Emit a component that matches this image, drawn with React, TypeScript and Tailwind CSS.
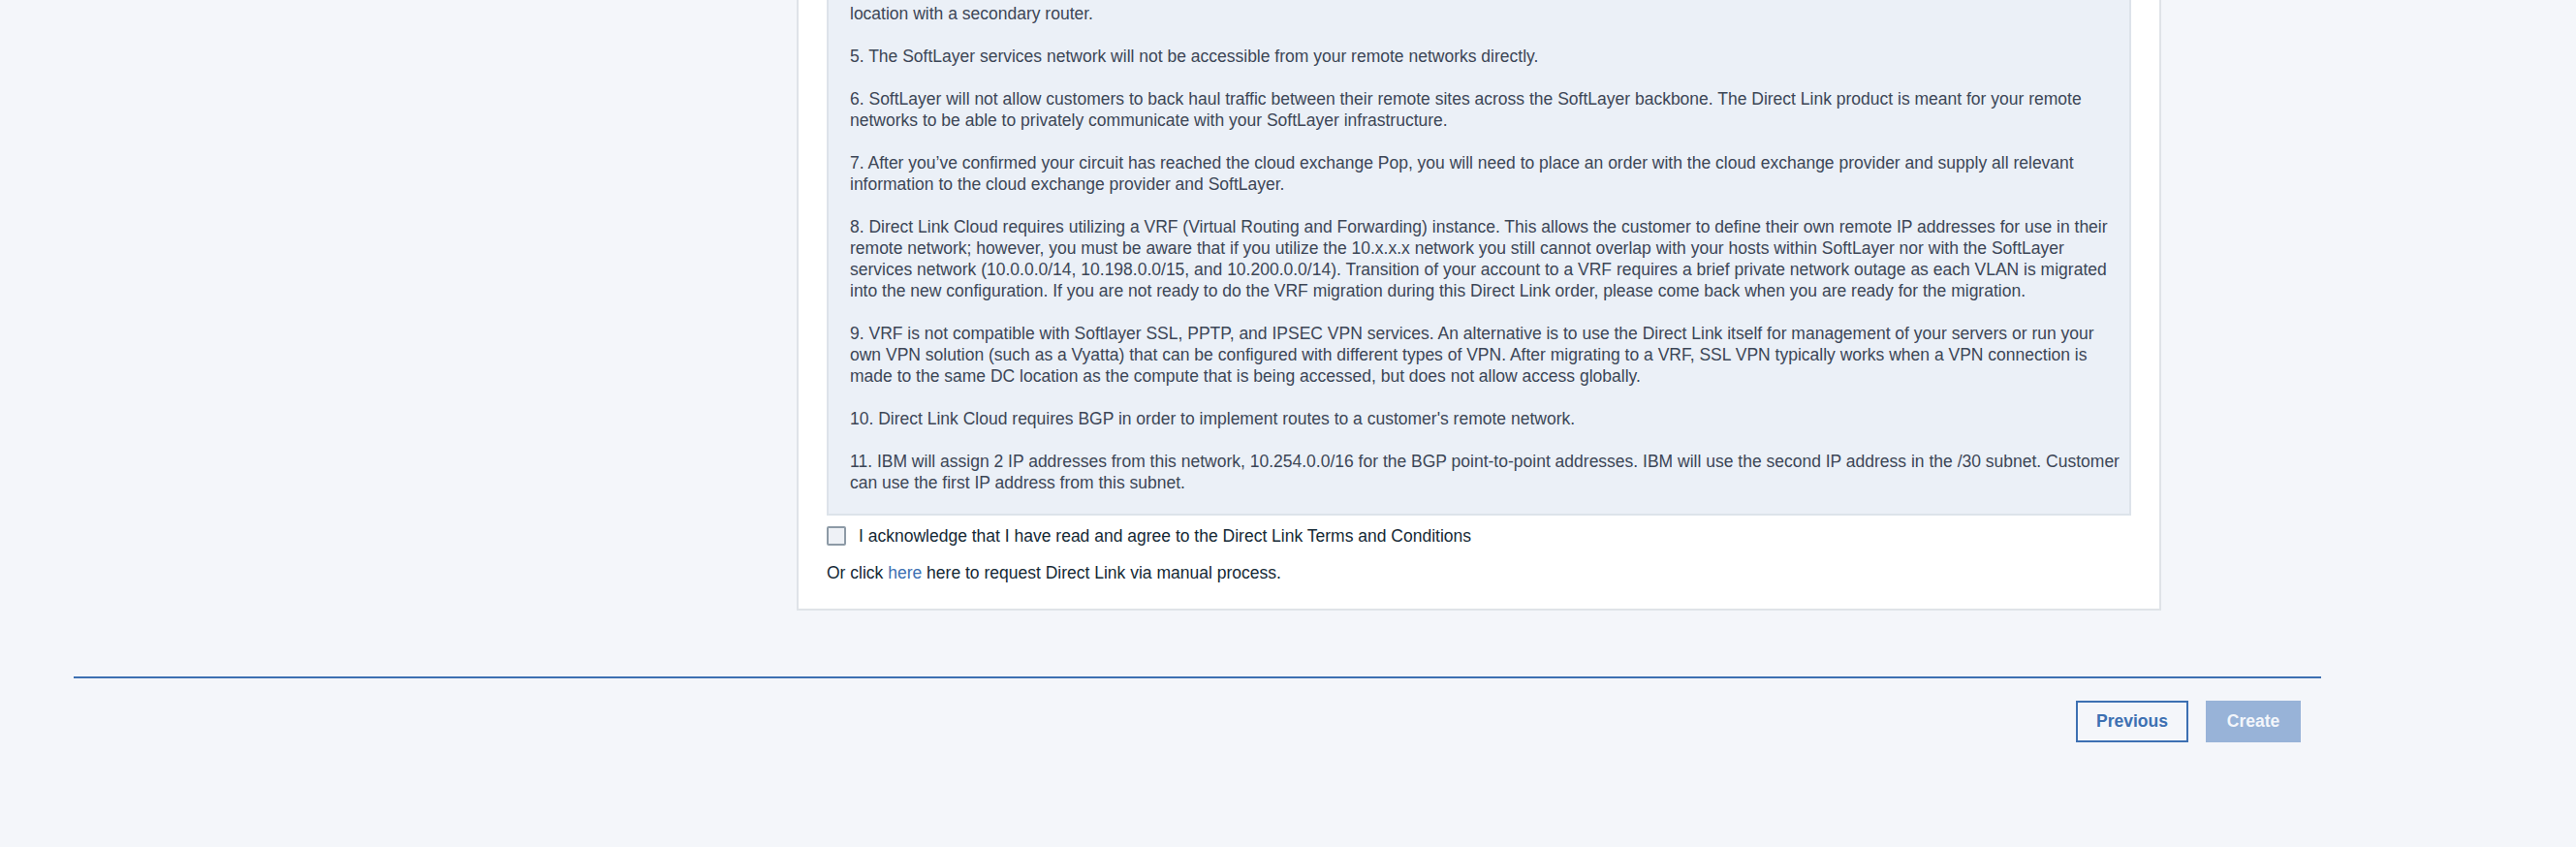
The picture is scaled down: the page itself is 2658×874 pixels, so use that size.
const terms: string[][] = [
  ["location with a secondary router."],
  ["5. The SoftLayer services network will not be accessible from your remote networks directly."],
  [
    "6. SoftLayer will not allow customers to back haul traffic between their remote sites across the SoftLayer backbone. The Direct Link product is meant for your remote",
    "networks to be able to privately communicate with your SoftLayer infrastructure.",
  ],
  [
    "7. After you’ve confirmed your circuit has reached the cloud exchange Pop, you will need to place an order with the cloud exchange provider and supply all relevant",
    "information to the cloud exchange provider and SoftLayer.",
  ],
  [
    "8. Direct Link Cloud requires utilizing a VRF (Virtual Routing and Forwarding) instance. This allows the customer to define their own remote IP addresses for use in their",
    "remote network; however, you must be aware that if you utilize the 10.x.x.x network you still cannot overlap with your hosts within SoftLayer nor with the SoftLayer",
    "services network (10.0.0.0/14, 10.198.0.0/15, and 10.200.0.0/14). Transition of your account to a VRF requires a brief private network outage as each VLAN is migrated",
    "into the new configuration. If you are not ready to do the VRF migration during this Direct Link order, please come back when you are ready for the migration.",
  ],
  [
    "9. VRF is not compatible with Softlayer SSL, PPTP, and IPSEC VPN services. An alternative is to use the Direct Link itself for management of your servers or run your",
    "own VPN solution (such as a Vyatta) that can be configured with different types of VPN. After migrating to a VRF, SSL VPN typically works when a VPN connection is",
    "made to the same DC location as the compute that is being accessed, but does not allow access globally.",
  ],
  ["10. Direct Link Cloud requires BGP in order to implement routes to a customer's remote network."],
  [
    "11. IBM will assign 2 IP addresses from this network, 10.254.0.0/16 for the BGP point-to-point addresses. IBM will use the second IP address in the /30 subnet. Customer",
    "can use the first IP address from this subnet.",
  ],
];

export default function App() {
  return (
    <div className="h-[874px] overflow-hidden bg-[#f4f6fa] font-['Liberation_Sans',Arial,sans-serif]">
      <div className="ml-[822px] w-[1408px] border-2 border-t-0 border-[#dfe3e8] bg-white px-[29px] pb-[26px]">
        <div className="border-2 border-t-0 border-[#dde3ea] bg-[#ebf0f7] px-[22px] pt-[3px] pb-[21px] text-[17.5px] leading-[22px] text-[#3c4656]">
          <div className="space-y-[22px]">
            {terms.map((para, i) => (
              <p key={i}>
                {para.map((line, j) => (
                  <span key={j} className="block whitespace-nowrap">
                    {line}
                  </span>
                ))}
              </p>
            ))}
          </div>
        </div>

        <label className="mt-[10px] flex h-[22px] items-center gap-[13px] text-[17.5px] leading-[22px] text-[#152935]">
          <span className="h-[20px] w-[20px] rounded-[2px] border-2 border-[#8d9aa6] bg-[#eef1f6]" />
          <span>I acknowledge that I have read and agree to the Direct Link Terms and Conditions</span>
        </label>

        <p className="mt-[16px] text-[17.5px] leading-[22px] text-[#152935]">
          Or click <a className="text-[#3d70b2]">here</a> here to request Direct Link via manual process.
        </p>
      </div>

      <div className="ml-[76px] mt-[68px] h-[2px] w-[2319px] bg-[#3d70b2]" />

      <div className="ml-[76px] mt-[23px] flex w-[2319px] justify-end gap-[18px] pr-[21px]">
        <button className="h-[43px] w-[116px] border-2 border-[#3d70b2] text-[17.5px] font-bold text-[#3d70b2]">
          Previous
        </button>
        <button className="h-[43px] w-[98px] bg-[#98b3d8] text-[17.5px] font-bold text-[#f3f6fb]">
          Create
        </button>
      </div>
    </div>
  );
}
